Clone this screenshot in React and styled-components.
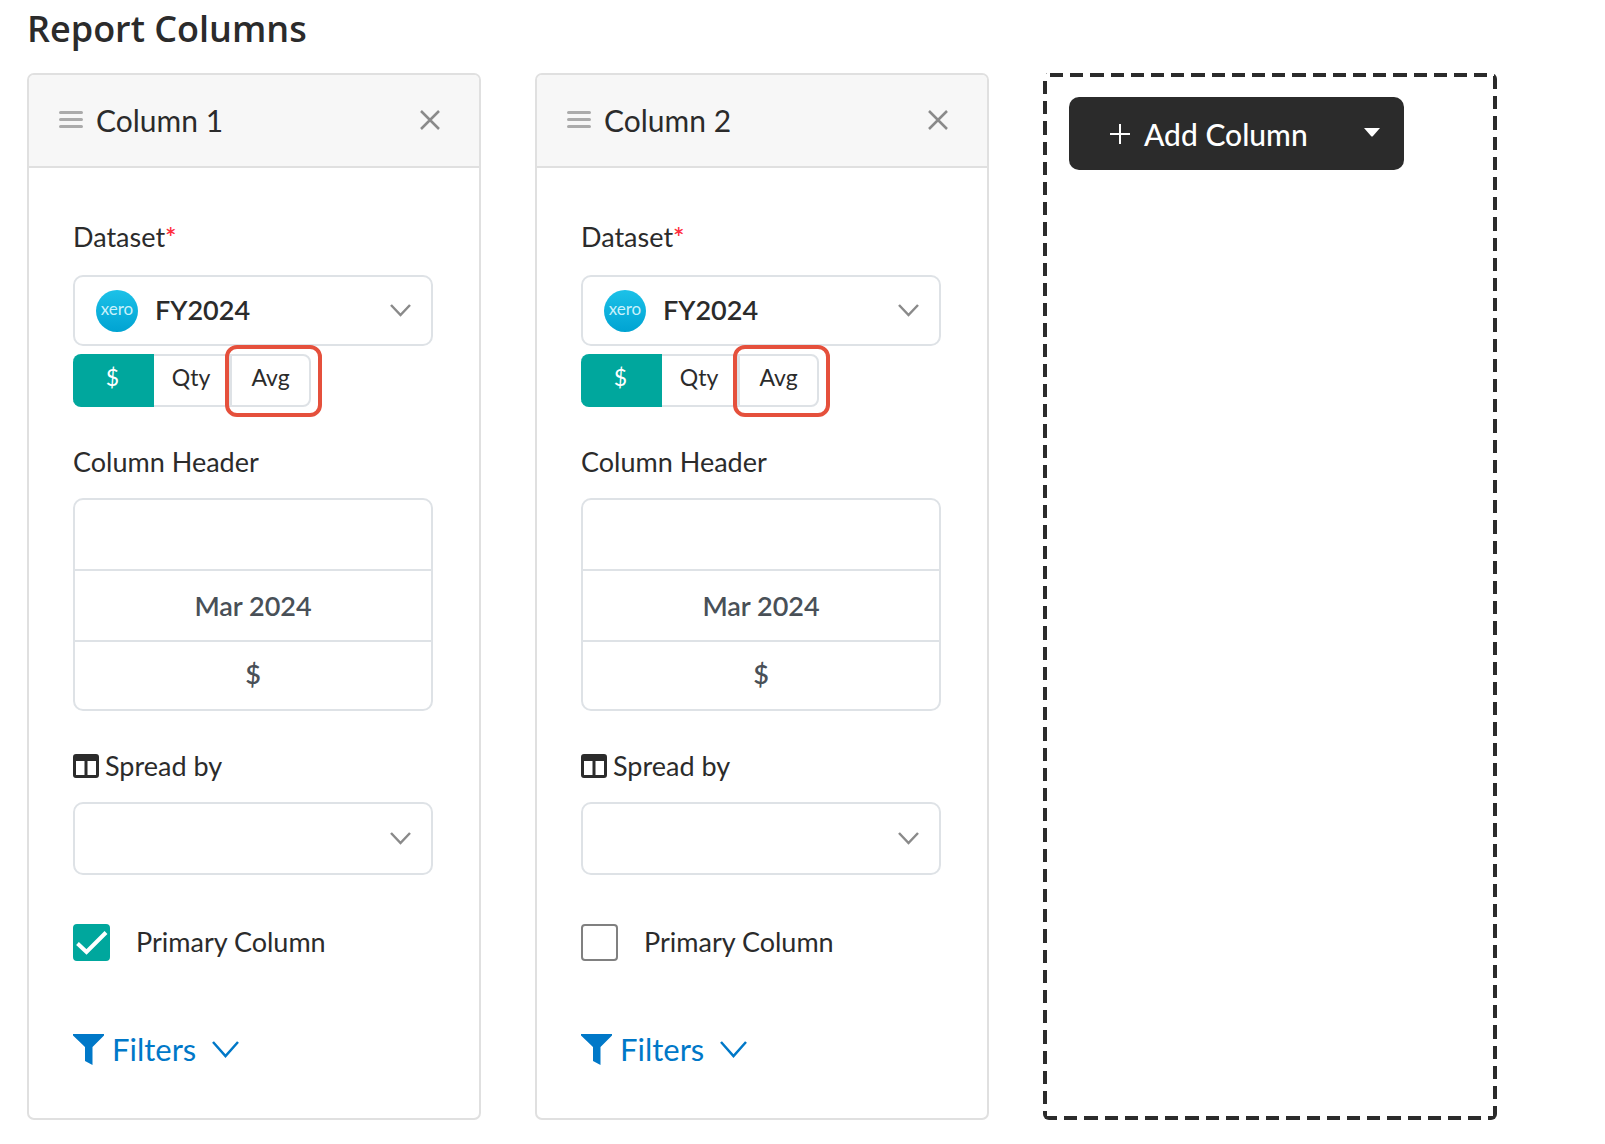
import React, { useState } from "react";
import styled, { createGlobalStyle, css } from "styled-components";

const GlobalStyle = createGlobalStyle`
  *, *::before, *::after { box-sizing: border-box; }
  body {
    margin: 0;
    background: #fff;
    color: #2b2b2b;
    font-family: Lato, "Liberation Sans", sans-serif;
    font-size: 27px;
    line-height: 36px;
  }
  button, input, select { font: inherit; color: inherit; }
`;

const Page = styled.main`
  padding: 4px 108px 26px 27px;
`;

const Title = styled.h1`
  margin: 0 0 19px;
  font-family: "Open Sans", "Noto Sans", sans-serif;
  font-size: 36px;
  font-weight: 600;
  line-height: 50px;
`;

const Columns = styled.div`
  display: grid;
  grid-template-columns: repeat(3, minmax(0, 1fr));
  gap: 54px;
`;

const Card = styled.section`
  display: flex;
  flex-direction: column;
  border: 2px solid #e0e0e0;
  border-radius: 7px;
  overflow: hidden;
`;

const CardHeader = styled.header`
  display: flex;
  align-items: center;
  gap: 13px;
  padding: 25px 39px 26px 30px;
  background: #f7f7f7;
  border-bottom: 2px solid #e0e0e0;
`;

const CardTitle = styled.h2`
  flex: 1;
  margin: 0;
  font-size: 30px;
  font-weight: 400;
  line-height: 40px;
`;

const IconButton = styled.button`
  display: flex;
  padding: 0;
  border: 0;
  background: none;
  color: #8a8a8a;
  cursor: pointer;
`;

const CardBody = styled.div`
  display: flex;
  flex-direction: column;
  padding: 51px 46px 49px 44px;
`;

const Field = styled.div`
  display: flex;
  flex-direction: column;
  gap: ${(p) => p.$gap || 18}px;
  margin-bottom: ${(p) => p.$after}px;
`;

const Label = styled.label`
  display: flex;
  align-items: center;
  gap: 6px;
`;

const Required = styled.span`
  color: #ff2d3d;
  font-weight: 600;
`;

const SelectBox = styled.div`
  display: flex;
  align-items: center;
  gap: 17px;
  height: ${(p) => p.$height}px;
  padding: 0 20px 0 21px;
  border: 2px solid #dee2e6;
  border-radius: 10px;
`;

const Select = styled.select`
  flex: 1;
  min-width: 0;
  height: 100%;
  padding: 0 0 2px;
  border: 0;
  outline: 0;
  appearance: none;
  background: none;
  font-weight: 600;
`;

const XeroBadge = styled.span`
  flex: none;
  width: 42px;
  height: 42px;
  border-radius: 50%;
  background: linear-gradient(#1cc1e8, #00a3d2);
  color: #c9f1fb;
  font-size: 17px;
  font-weight: 400;
  line-height: 38px;
  text-align: center;
`;

const Segments = styled.div`
  display: flex;
  margin-top: 8px;
  height: 53px;
`;

const Segment = styled.button`
  width: ${(p) => p.$width}px;
  padding: 0 0 8px;
  border: 2px solid #dee2e6;
  border-left-width: 0;
  background: #fff;
  font-size: 23px;
  cursor: pointer;
  ${(p) =>
    p.$active &&
    css`
      background: #00a79d;
      border-color: #00a79d;
      color: #fff;
    `}
  &:first-child { border-radius: 8px 0 0 8px; }
`;

const LastSegment = styled.div`
  position: relative;
  display: flex;
  ${Segment} {
    border-left-width: 2px;
    border-radius: 0 8px 8px 0;
  }
`;

const Highlight = styled.span`
  position: absolute;
  inset: -9px -11px -10px -5px;
  border: 4px solid #e5503c;
  border-radius: 12px;
  pointer-events: none;
`;

const HeaderLines = styled.div`
  display: flex;
  flex-direction: column;
  border: 2px solid #dee2e6;
  border-radius: 10px;
  overflow: hidden;
`;

const HeaderLine = styled.input`
  width: 100%;
  height: 71px;
  padding: 0;
  border: 0;
  border-bottom: 2px solid #dee2e6;
  outline: 0;
  background: none;
  color: #495057;
  font-weight: 600;
  text-align: center;
  &:last-child {
    height: 67px;
    padding-bottom: 4px;
    border-bottom: 0;
  }
`;

const CheckRow = styled.label`
  display: flex;
  align-items: center;
  gap: 26px;
  height: 37px;
  margin-bottom: 68px;
`;

const CheckText = styled.span`
  padding-bottom: 2px;
`;

const Checkbox = styled.input`
  display: grid;
  place-items: center;
  width: 37px;
  height: 37px;
  margin: 0;
  appearance: none;
  border: 2px solid #808080;
  border-radius: 4px;
  &:checked {
    background: #00a79d;
    border-color: #00a79d;
  }
`;

const CheckWrap = styled.span`
  display: grid;
  > * { grid-area: 1 / 1; }
  svg { pointer-events: none; }
`;

const FilterLink = styled.a`
  display: flex;
  align-items: center;
  align-self: flex-start;
  gap: 8px;
  color: #0078c8;
  font-size: 31px;
  line-height: 40px;
  text-decoration: none;
`;

const FilterText = styled.span`
  margin-right: 8px;
`;

const dashX = "repeating-linear-gradient(90deg, #2b2b2b 0 13%, transparent 13% 20%)";
const dashY = "repeating-linear-gradient(180deg, #2b2b2b 0 13%, transparent 13% 20%)";

const DropZone = styled.section`
  padding: 24px 26px;
  border-radius: 6px;
  background:
    ${dashX} 7px 0 / 101px 4px repeat-x,
    ${dashX} 1px 100% / 101px 4px repeat-x,
    ${dashY} 0 8px / 4px 101px repeat-y,
    ${dashY} 100% 3px / 4px 101px repeat-y;
`;

const ButtonGroup = styled.div`
  display: inline-flex;
  height: 73px;
  border-radius: 10px;
  overflow: hidden;
  background: #2b2b2b;
  color: #fff;
`;

const AddButton = styled.button`
  display: flex;
  align-items: center;
  gap: 14px;
  padding: 0 32px 0 41px;
  border: 0;
  background: none;
  font-size: 30px;
  font-weight: 500;
  line-height: 40px;
  cursor: pointer;
`;

const CaretButton = styled.button`
  display: flex;
  align-items: center;
  justify-content: center;
  width: 64px;
  padding: 0 0 2px;
  border: 0;
  background: none;
  cursor: pointer;
`;

const GripIcon = () => (
  <svg width="24" height="18" viewBox="0 0 24 18" fill="none" stroke="#ababab" strokeWidth="3" strokeLinecap="round" aria-hidden="true">
    <path d="M1.5 1.5H22.5M1.5 8.5H22.5M1.5 15.5H22.5" />
  </svg>
);

const CloseIcon = () => (
  <svg width="20" height="20" viewBox="0 0 20 20" fill="none" stroke="currentColor" strokeWidth="2.5" aria-hidden="true">
    <path d="M1 1L19 19M19 1L1 19" />
  </svg>
);

const Chevron = ({ width = 21, height = 13, color = "#8a8a8a" }) => (
  <svg width={width} height={height} viewBox={`0 0 ${width} ${height}`} fill="none" stroke={color} strokeWidth="2.5" aria-hidden="true">
    <path d={`M1 1L${width / 2} ${height - 2}L${width - 1} 1`} />
  </svg>
);

const TableIcon = () => (
  <svg width="26" height="24" viewBox="0 0 26 24" aria-hidden="true">
    <path fill="#2b2b2b" fillRule="evenodd" d="M3 0H23Q26 0 26 3V21Q26 24 23 24H3Q0 24 0 21V3Q0 0 3 0ZM3 7V21H11.5V7ZM14.5 7V21H23V7Z" />
  </svg>
);

const CheckIcon = () => (
  <svg width="37" height="37" viewBox="0 0 37 37" fill="none" stroke="#fff" strokeWidth="4" aria-hidden="true">
    <path d="M4.5 19.5L13.5 28L33 8.5" />
  </svg>
);

const FunnelIcon = () => (
  <svg width="31" height="31" viewBox="0 0 31 31" aria-hidden="true">
    <path fill="currentColor" d="M0 0H31V1.5L19.5 13V31L12 27V13L0 1.5Z" />
  </svg>
);

const PlusIcon = () => (
  <svg width="20" height="20" viewBox="0 0 20 20" stroke="#fff" strokeWidth="2" aria-hidden="true">
    <path d="M0 10H20M10 0V20" />
  </svg>
);

const CaretIcon = () => (
  <svg width="16" height="9" viewBox="0 0 16 9" aria-hidden="true">
    <path fill="#fff" d="M0 0H16L9 8Q8 9 7 8Z" />
  </svg>
);

function ColumnCard({ number, primary }) {
  const [checked, setChecked] = useState(primary);
  const [mode, setMode] = useState("$");
  const id = (name) => `column-${number}-${name}`;
  return (
    <Card>
      <CardHeader>
        <GripIcon />
        <CardTitle>Column {number}</CardTitle>
        <IconButton type="button" aria-label={`Remove column ${number}`}>
          <CloseIcon />
        </IconButton>
      </CardHeader>
      <CardBody>
        <Field $gap={20} $after={0}>
          <Label htmlFor={id("dataset")}>
            <span>Dataset<Required>*</Required></span>
          </Label>
          <SelectBox $height={71}>
            <XeroBadge aria-hidden="true">xero</XeroBadge>
            <Select id={id("dataset")} defaultValue="FY2024">
              <option>FY2024</option>
            </Select>
            <Chevron />
          </SelectBox>
        </Field>
        <Field $after={37}>
          <Segments>
            <Segment type="button" $width={81} $active={mode === "$"} onClick={() => setMode("$")}>$</Segment>
            <Segment type="button" $width={76} $active={mode === "Qty"} onClick={() => setMode("Qty")}>Qty</Segment>
            <LastSegment>
              <Segment type="button" $width={81} $active={mode === "Avg"} onClick={() => setMode("Avg")}>Avg</Segment>
              <Highlight />
            </LastSegment>
          </Segments>
        </Field>
        <Field $after={37}>
          <Label htmlFor={id("header")}>Column Header</Label>
          <HeaderLines>
            <HeaderLine id={id("header")} />
            <HeaderLine aria-label="Second header line" defaultValue="Mar 2024" />
            <HeaderLine aria-label="Third header line" defaultValue="$" />
          </HeaderLines>
        </Field>
        <Field $after={49}>
          <Label htmlFor={id("spread")}>
            <TableIcon />
            Spread by
          </Label>
          <SelectBox $height={73}>
            <Select id={id("spread")} defaultValue="">
              <option value=""></option>
            </Select>
            <Chevron />
          </SelectBox>
        </Field>
        <CheckRow>
          <CheckWrap>
            <Checkbox type="checkbox" checked={checked} onChange={(e) => setChecked(e.target.checked)} />
            {checked && <CheckIcon />}
          </CheckWrap>
          <CheckText>Primary Column</CheckText>
        </CheckRow>
        <FilterLink href="#filters">
          <FunnelIcon />
          <FilterText>Filters</FilterText>
          <Chevron width={27} height={17} color="#0078c8" />
        </FilterLink>
      </CardBody>
    </Card>
  );
}

export default function App() {
  return (
    <>
      <GlobalStyle />
      <Page>
        <Title>Report Columns</Title>
        <Columns>
          <ColumnCard number={1} primary />
          <ColumnCard number={2} primary={false} />
          <DropZone>
            <ButtonGroup>
              <AddButton type="button">
                <PlusIcon />
                Add Column
              </AddButton>
              <CaretButton type="button" aria-label="More column types">
                <CaretIcon />
              </CaretButton>
            </ButtonGroup>
          </DropZone>
        </Columns>
      </Page>
    </>
  );
}
